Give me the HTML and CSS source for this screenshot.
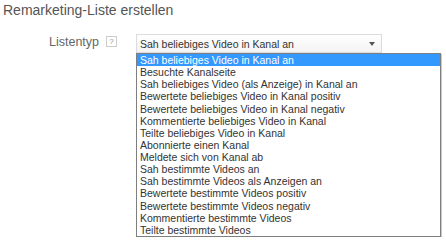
FILE: index.html
```html
<!DOCTYPE html>
<html lang="de">
<head>
    <meta charset="UTF-8">
    <meta name="viewport" content="width=device-width, initial-scale=1.0">
    <title>Remarketing-Liste erstellen</title>
    <link rel="stylesheet" href="styles.css">
</head>
<body>
    <div class="page">
        <h1 class="title">Remarketing-Liste erstellen</h1>
        <div class="field">
            <div class="field-label">
                <span>Listentyp</span>
                <span class="help">?</span>
            </div>
            <div class="picker">
                <div class="select">
                    <span>Sah beliebiges Video in Kanal an</span>
                    <span class="arrow"></span>
                </div>
                <ul class="options">
                    <li class="selected">Sah beliebiges Video in Kanal an</li>
                    <li>Besuchte Kanalseite</li>
                    <li>Sah beliebiges Video (als Anzeige) in Kanal an</li>
                    <li>Bewertete beliebiges Video in Kanal positiv</li>
                    <li>Bewertete beliebiges Video in Kanal negativ</li>
                    <li>Kommentierte beliebiges Video in Kanal</li>
                    <li>Teilte beliebiges Video in Kanal</li>
                    <li>Abonnierte einen Kanal</li>
                    <li>Meldete sich von Kanal ab</li>
                    <li>Sah bestimmte Videos an</li>
                    <li>Sah bestimmte Videos als Anzeigen an</li>
                    <li>Bewertete bestimmte Videos positiv</li>
                    <li>Bewertete bestimmte Videos negativ</li>
                    <li>Kommentierte bestimmte Videos</li>
                    <li>Teilte bestimmte Videos</li>
                </ul>
            </div>
        </div>
    </div>
</body>
</html>
```

FILE: styles.css
```css
body {
    margin: 0;
    background: #fff;
    font-family: "Liberation Sans", Arial, sans-serif;
}

.page {
    padding: 2px 0 0 3px;
}

.title {
    margin: 0;
    font-size: 14px;
    font-weight: normal;
    line-height: 16px;
    color: #555;
}

.field {
    display: flex;
    margin-top: 16px;
}

.field-label {
    display: flex;
    align-items: flex-start;
    width: 133px;
    padding-left: 46px;
    box-sizing: border-box;
    padding-top: 1px;
    font-size: 12.5px;
    line-height: 15px;
    color: #666;
}

.help {
    display: flex;
    align-items: center;
    justify-content: center;
    width: 9px;
    height: 9px;
    margin: 1px 0 0 7px;
    border: 1px solid #ccc;
    font-size: 8px;
    line-height: 9px;
    color: #999;
}

.picker {
    display: flex;
    flex-direction: column;
    align-items: flex-start;
}

.select {
    display: flex;
    align-items: center;
    justify-content: space-between;
    width: 246px;
    height: 19px;
    box-sizing: border-box;
    padding: 0 5px 0 3px;
    border: 1px solid #dcdcdc;
    background: linear-gradient(#fff, #f3f3f3);
    font-size: 10.5px;
    color: #333;
}

.arrow {
    width: 0;
    height: 0;
    margin-right: 1px;
    border-left: 3.5px solid transparent;
    border-right: 3.5px solid transparent;
    border-top: 4px solid #555;
}

.options {
    width: 305px;
    margin: 0;
    padding: 0;
    list-style: none;
    box-sizing: border-box;
    border: 1px solid #7f7f7f;
    background: #fff;
    box-shadow: 1px 1px 0 #c8c8c8;
    font-size: 10.5px;
    line-height: 12.13px;
    color: #333;
}

.options li {
    padding-left: 3px;
    white-space: nowrap;
}

.options .selected {
    background: #3399ff;
    color: #fff;
}
```
